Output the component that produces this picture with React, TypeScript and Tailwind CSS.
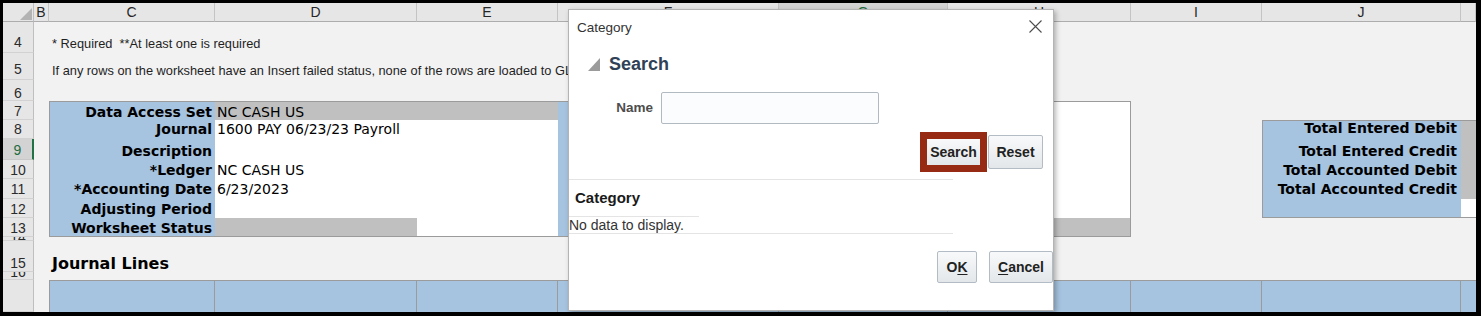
import React from 'react';

const cellFont = "font-['DejaVu_Sans',sans-serif]";
const uiFont = "font-['Liberation_Sans',Arial,sans-serif]";
const BLUE = 'bg-[#a6c3df]';
const GRAY = 'bg-[#c0c0c0]';
const BD = 'border-[#9b9b9b]';

const columns = [
  { w: 'w-[15px]', l: 'B' },
  { w: 'w-[166px]', l: 'C' },
  { w: 'w-[202px]', l: 'D' },
  { w: 'w-[141px]', l: 'E' },
  { w: 'w-[221px]', l: 'F' },
  { w: 'w-[169px]', l: 'G', selected: true },
  { w: 'w-[183px]', l: 'H' },
  { w: 'w-[131px]', l: 'I' },
  { w: 'w-[199px]', l: 'J' },
  { w: 'w-[15px]', l: '' },
];

function HeaderRow() {
  return (
    <div className={`flex h-[19px] ${uiFont} text-[14px] leading-[14px]`}>
      <div className="w-[31px] shrink-0 flex justify-end items-end pr-[1px] pb-[1px] bg-[#e6e6e6] border-r border-b border-r-[#bfbfbf] border-b-[#adadad]">
        <svg width="12" height="12" viewBox="0 0 12 12">
          <polygon points="12,0 12,12 0,12" fill="#b3b3b3" />
        </svg>
      </div>
      {columns.map((c, i) => (
        <div
          key={i}
          className={`${c.w} shrink-0 flex items-center justify-center border-r border-r-[#c4c4c4] ${
            c.selected
              ? 'bg-[#d3d3d3] text-[#1e6b41] border-b-2 border-b-[#217346]'
              : 'bg-[#e6e6e6] text-[#262626] border-b border-b-[#adadad]'
          }`}
        >
          {c.l}
        </div>
      ))}
    </div>
  );
}

type RowProps = {
  h: string;
  n?: string;
  numCls?: string;
  selected?: boolean;
  clip?: boolean;
  children?: React.ReactNode;
};

function Row({ h, n, numCls = 'pb-[2px]', selected, clip, children }: RowProps) {
  return (
    <div className={`flex ${h}`}>
      <div
        className={`w-[31px] shrink-0 flex justify-center items-end border-b ${clip ? 'overflow-hidden' : ''} ${
          selected
            ? 'bg-[#d3d3d3] text-[#1e6b41] border-r-2 border-r-[#217346] border-b-[#c8c8c8]'
            : 'bg-[#e6e6e6] text-[#2b2b2b] border-r border-r-[#bfbfbf] border-b-[#d2d2d2]'
        }`}
      >
        {n && <span className={`${uiFont} text-[14px] leading-[14px] ${numCls}`}>{n}</span>}
      </div>
      <div className="w-[15px] shrink-0" />
      {children}
    </div>
  );
}

function Cell({ cls, txt = 'pb-[3px]', children }: { cls: string; txt?: string; children?: React.ReactNode }) {
  return (
    <div className={`shrink-0 flex ${cls}`}>
      {children != null && (
        <span className={`${cellFont} whitespace-nowrap text-[14px] leading-[12px] text-black ${txt}`}>{children}</span>
      )}
    </div>
  );
}

function Note({ children }: { children: React.ReactNode }) {
  return (
    <div className="flex items-end pl-[3px]">
      <span className={`${uiFont} whitespace-nowrap text-[12.8px] leading-[13px] pb-[3px] text-[#1f1f1f]`}>{children}</span>
    </div>
  );
}

const label = `w-[166px] ${BLUE} border-l ${BD} items-end justify-end pr-[3px]`;
const value = 'w-[343px] bg-white items-end pl-[2px]';
const total = `w-[199px] ${BLUE} border-l ${BD} items-end justify-end pr-[4px]`;

function CategoryDialog() {
  const btn =
    'flex items-center justify-center bg-linear-to-b from-[#f8f9fa] to-[#e3e7ea] rounded-[2px] font-bold text-[14px] leading-[16px] text-[#222]';
  return (
    <div
      className={`absolute left-[565px] top-[6px] w-[486px] h-[302px] bg-white border border-[#b4b4b4] shadow-[2px_2px_5px_rgba(0,0,0,0.28)] flex flex-col ${uiFont}`}
    >
      <div className="flex justify-between items-start pt-[10px] pl-[8px] pr-[11px]">
        <span className="text-[13.5px] leading-[16px] text-[#333]">Category</span>
        <svg width="13" height="13" viewBox="0 0 13 13">
          <path d="M0.5 0.5L12.5 12.5M12.5 0.5L0.5 12.5" stroke="#4d4d4d" strokeWidth="1.1" fill="none" />
        </svg>
      </div>

      <div className="mt-[18px] pl-[19px] flex items-center gap-[9px]">
        <svg width="12" height="13" viewBox="0 0 12 13">
          <polygon points="12,0 12,13 0,13" fill="#9b9b9b" />
        </svg>
        <span className="font-bold text-[18px] leading-[20px] text-[#2f4156]">Search</span>
      </div>

      <div className="mt-[18px] flex items-center gap-[8px]">
        <span className="w-[84px] text-right font-bold text-[13.5px] leading-[16px] text-[#4d4d4d] mb-[1px]">Name</span>
        <input className="w-[218px] h-[32px] border border-[#b1b9c1] bg-[#fbfcfd] rounded-[2px] outline-none" />
      </div>

      <div className="mt-[8px] pr-[10px] flex justify-end items-center">
        <div className="w-[67px] h-[40px] border-[7px] border-[#962a12] flex">
          <button className={`${btn} flex-1 rounded-none`}>Search</button>
        </div>
        <button className={`${btn} ml-[1px] w-[55px] h-[34px] border border-[#b3bcc5]`}>Reset</button>
      </div>

      <div className="mt-[7px] w-[384px] h-px bg-[#e4e4e4]" />
      <div className="mt-[9px] pl-[6px] font-bold text-[15px] leading-[18px] text-[#1a1a1a]">Category</div>
      <div className="mt-[9px] w-[130px] h-px bg-[#e4e4e4]" />
      <div className="text-[14px] leading-[16px] text-[#333]">No data to display.</div>
      <div className="w-[384px] h-px bg-[#e4e4e4]" />

      <div className="mt-[17px] flex justify-end gap-[12px]">
        <button className={`${btn} w-[40px] h-[32px] border border-[#b3bcc5]`}>
          O<span className="underline underline-offset-[2px]">K</span>
        </button>
        <button className={`${btn} w-[64px] h-[32px] border border-[#b3bcc5]`}>
          <span className="underline underline-offset-[2px]">C</span>ancel
        </button>
      </div>
    </div>
  );
}

export default function App() {
  return (
    <div className="w-[1481px] h-[316px] bg-black pt-[3px] pl-[3px] pr-[5px] pb-[4px]">
      <div className="relative h-full bg-[#f2f2f2] overflow-hidden">
        <HeaderRow />

        <Row h="h-[31px]" n="4" numCls="pb-[3px]">
          <Note>* Required&nbsp;&nbsp;**At least one is required</Note>
        </Row>
        <Row h="h-[27px]" n="5" numCls="pb-[3px]">
          <Note>
            If any rows on the worksheet have an Insert failed status, none of the rows are loaded to GL Interface.
          </Note>
        </Row>
        <Row h="h-[21px]" n="6" numCls="pb-0" />

        <Row h="h-[19px]" n="7" numCls="pb-[1px]">
          <Cell cls={`${label} border-t`} txt="font-bold pb-[2px]">Data Access Set</Cell>
          <Cell cls={`w-[343px] ${GRAY} border-t ${BD} items-end pl-[2px]`} txt="pb-[2px]">NC CASH US</Cell>
          <Cell cls={`w-[221px] ${BLUE} border-t ${BD}`} />
          <Cell cls={`w-[352px] bg-white border-t border-r ${BD}`} />
        </Row>
        <Row h="h-[19px]" n="8" numCls="pb-[2px]">
          <Cell cls={label} txt="font-bold pb-[4px]">Journal</Cell>
          <Cell cls={value} txt="pb-[4px]">1600 PAY 06/23/23 Payroll</Cell>
          <Cell cls={`w-[221px] ${BLUE}`} />
          <Cell cls={`w-[352px] bg-white border-r ${BD}`} />
          <div className="w-[131px] shrink-0" />
          <Cell cls={`${total} border-t`} txt="font-bold pb-[5px]">Total Entered Debit</Cell>
          <Cell cls={`w-[15px] ${GRAY} border-t ${BD}`} />
        </Row>
        <Row h="h-[21px]" n="9" numCls="pb-[2px]" selected>
          <Cell cls={label} txt="font-bold pb-[3px]">Description</Cell>
          <Cell cls="w-[343px] bg-white" />
          <Cell cls={`w-[221px] ${BLUE}`} />
          <Cell cls={`w-[352px] bg-white border-r ${BD}`} />
          <div className="w-[131px] shrink-0" />
          <Cell cls={total} txt="font-bold pb-[3px]">Total Entered Credit</Cell>
          <Cell cls={`w-[15px] ${GRAY}`} />
        </Row>
        <Row h="h-[19px]" n="10" numCls="pb-[1px]">
          <Cell cls={label} txt="font-bold pb-[3px]">*Ledger</Cell>
          <Cell cls={value} txt="pb-[3px]">NC CASH US</Cell>
          <Cell cls={`w-[221px] ${BLUE}`} />
          <Cell cls={`w-[352px] bg-white border-r ${BD}`} />
          <div className="w-[131px] shrink-0" />
          <Cell cls={total} txt="font-bold pb-[3px]">Total Accounted Debit</Cell>
          <Cell cls={`w-[15px] ${GRAY}`} />
        </Row>
        <Row h="h-[20px]" n="11" numCls="pb-[2px]">
          <Cell cls={label} txt="font-bold pb-[4px]">*Accounting Date</Cell>
          <Cell cls={value} txt="pb-[4px]">6/23/2023</Cell>
          <Cell cls={`w-[221px] ${BLUE}`} />
          <Cell cls={`w-[352px] bg-white border-r ${BD}`} />
          <div className="w-[131px] shrink-0" />
          <Cell cls={total} txt="font-bold pb-[4px]">Total Accounted Credit</Cell>
          <Cell cls={`w-[15px] ${GRAY}`} />
        </Row>
        <Row h="h-[19px]" n="12" numCls="pb-[1px]">
          <Cell cls={label} txt="font-bold pb-[3px]">Adjusting Period</Cell>
          <Cell cls="w-[343px] bg-white" />
          <Cell cls={`w-[221px] ${BLUE}`} />
          <Cell cls={`w-[352px] bg-white border-r ${BD}`} />
          <div className="w-[131px] shrink-0" />
          <Cell cls={`w-[199px] ${BLUE} border-l border-b ${BD}`} />
          <Cell cls={`w-[15px] bg-white border-b ${BD}`} />
        </Row>
        <Row h="h-[19px]" n="13" numCls="pb-[1px]">
          <Cell cls={`${label} border-b`} txt="font-bold pb-[2px]">Worksheet Status</Cell>
          <Cell cls={`w-[202px] ${GRAY} border-b ${BD}`} />
          <Cell cls={`w-[141px] bg-white border-b ${BD}`} />
          <Cell cls={`w-[221px] ${BLUE} border-b ${BD}`} />
          <Cell cls={`w-[352px] ${GRAY} border-b border-r ${BD}`} />
        </Row>
        <Row h="h-[4px]" n="14" numCls="-mb-[4px]" clip />
        <Row h="h-[31px]" n="15" numCls="pb-[1px]">
          <div className="flex items-end pl-[3px]">
            <span className={`${cellFont} font-bold text-[16px] leading-[14px] pb-[1px] text-black`}>Journal Lines</span>
          </div>
        </Row>
        <Row h="h-[8px]" n="16" numCls="pb-0" clip />
        <Row h="h-[32px]">
          <div className={`w-[166px] shrink-0 ${BLUE} border-l border-t border-r ${BD}`} />
          <div className={`w-[202px] shrink-0 ${BLUE} border-t border-r ${BD}`} />
          <div className={`w-[141px] shrink-0 ${BLUE} border-t border-r ${BD}`} />
          <div className={`w-[221px] shrink-0 ${BLUE} border-t border-r ${BD}`} />
          <div className={`w-[169px] shrink-0 ${BLUE} border-t border-r ${BD}`} />
          <div className={`w-[183px] shrink-0 ${BLUE} border-t border-r ${BD}`} />
          <div className={`w-[131px] shrink-0 ${BLUE} border-t border-r ${BD}`} />
          <div className={`w-[199px] shrink-0 ${BLUE} border-t border-r ${BD}`} />
          <div className={`w-[15px] shrink-0 ${BLUE} border-t ${BD}`} />
        </Row>

        <CategoryDialog />
      </div>
    </div>
  );
}
